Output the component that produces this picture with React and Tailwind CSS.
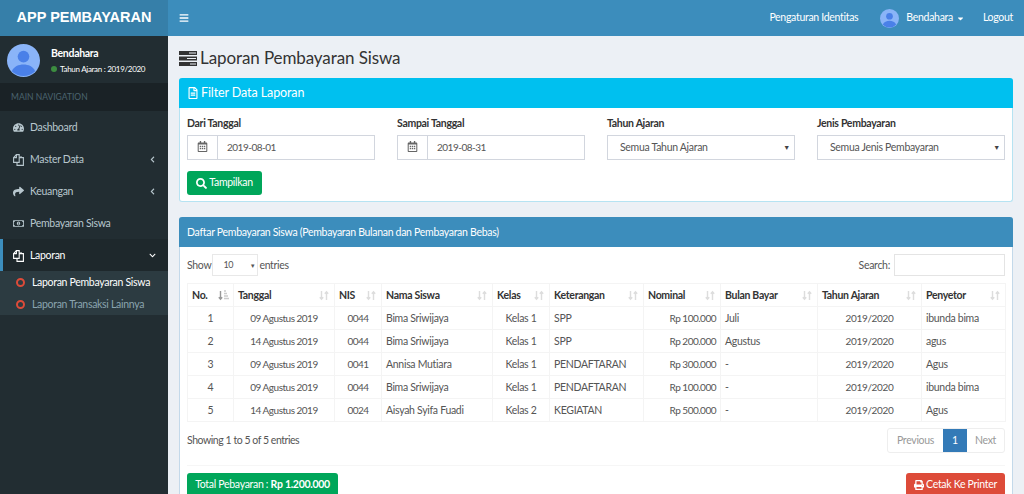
import { FaBars, FaRegCalendarAlt, FaCaretDown, FaChevronDown, FaChevronLeft, FaRegFileAlt, FaRegMoneyBillAlt, FaPrint, FaSearch, FaShare, FaTachometerAlt } from "react-icons/fa";

function FilesIcon() {
  return (
    <svg width="11" height="12" viewBox="0 0 11 12" fill="none" stroke="currentColor" strokeWidth="1.1">
      <path d="M.6 3.6 3.4.6h2.8v7.8H.6z" />
      <path d="M.6 3.6h2.8V.6" />
      <path d="M4 8.4v3h6.4V3.6H6.2" />
      <path d="M8 3.6V2" />
    </svg>
  );
}

const MENU = [
  { label: "Dashboard", icon: <FaTachometerAlt /> },
  { label: "Master Data", icon: <FilesIcon />, arrow: true },
  { label: "Keuangan", icon: <FaShare />, arrow: true },
  { label: "Pembayaran Siswa", icon: <FaRegMoneyBillAlt /> },
];

const COLS = [
  { label: "No.", w: "w-[46px]" },
  { label: "Tanggal", w: "w-[101px]" },
  { label: "NIS", w: "w-[47px]" },
  { label: "Nama Siswa", w: "w-[111px]" },
  { label: "Kelas", w: "w-[57px]" },
  { label: "Keterangan", w: "w-[94px]" },
  { label: "Nominal", w: "w-[77px]" },
  { label: "Bulan Bayar", w: "w-[97px]" },
  { label: "Tahun Ajaran", w: "w-[104px]" },
  { label: "Penyetor", w: "w-[84px]" },
];

const ROWS = [
  ["1", "09 Agustus 2019", "0044", "Bima Sriwijaya", "Kelas 1", "SPP", "Rp 100.000", "Juli", "2019/2020", "ibunda bima"],
  ["2", "14 Agustus 2019", "0044", "Bima Sriwijaya", "Kelas 1", "SPP", "Rp 200.000", "Agustus", "2019/2020", "agus"],
  ["3", "09 Agustus 2019", "0041", "Annisa Mutiara", "Kelas 1", "PENDAFTARAN", "Rp 300.000", "-", "2019/2020", "Agus"],
  ["4", "09 Agustus 2019", "0044", "Bima Sriwijaya", "Kelas 1", "PENDAFTARAN", "Rp 100.000", "-", "2019/2020", "ibunda bima"],
  ["5", "14 Agustus 2019", "0024", "Aisyah Syifa Fuadi", "Kelas 2", "KEGIATAN", "Rp 500.000", "-", "2019/2020", "Agus"],
];

// number columns are squeezed a bit more, Lato digits run wide
const CELL = [
  "text-center",
  "text-center text-[10px] tracking-[-0.5px]",
  "text-center text-[10px] tracking-[-0.5px]",
  "text-left",
  "text-center",
  "text-left",
  "text-right text-[10px] tracking-[-0.5px]",
  "text-left",
  "text-center text-[10px] tracking-[-0.3px]",
  "text-left",
];

function Avatar({ size }) {
  return (
    <svg width={size} height={size} viewBox="0 0 34 34" className="shrink-0">
      <circle cx="17" cy="17" r="17" fill="#8ab4f8" />
      <circle cx="17" cy="13" r="6" fill="#4a80e8" />
      <path d="M5 28c2-5 7-7 12-7s10 2 12 7a17 17 0 0 1-24 0z" fill="#4a80e8" />
    </svg>
  );
}

function SortIcon({ active }) {
  return (
    <svg width="11" height="11" viewBox="0 0 11 11" className="shrink-0">
      <path d="M2.5 1v8M.8 7.2l1.7 2 1.7-2" fill="none" stroke={active ? "#999" : "#ddd"} strokeWidth="1.4" />
      {active ? (
        <path d="M6 1h2M6 3.5h3M6 6h4M6 8.5h5" stroke="#ccc" strokeWidth="1.3" />
      ) : (
        <path d="M7.5 10V2M5.8 3.8l1.7-2 1.7 2" fill="none" stroke="#ddd" strokeWidth="1.4" />
      )}
    </svg>
  );
}

function DateInput({ value }) {
  return (
    <div className="flex h-[25px] w-[188px] border border-[#d2d6de] text-[10px] tracking-[-0.5px] text-[#555]">
      <span className="flex w-[30px] items-center justify-center border-r border-[#d2d6de] pb-[3px] text-[11px] text-[#666]">
        <FaRegCalendarAlt />
      </span>
      <span className="flex items-center pl-[9px]">{value}</span>
    </div>
  );
}

function SelectBox({ value }) {
  return (
    <div className="flex h-[25px] w-[188px] items-center justify-between border border-[#d2d6de] pl-3 pr-1 text-[#555]">
      <span>{value}</span>
      <span className="text-[7px] text-[#444]">▼</span>
    </div>
  );
}

function Field({ label, children }) {
  return (
    <div className="w-[210px] shrink-0">
      <div className="mb-[5px] leading-[14px] font-bold text-[#333]">{label}</div>
      {children}
    </div>
  );
}

export default function App() {
  return (
    <div className="flex h-[494px] w-[1024px] flex-col overflow-hidden bg-[#ecf0f5] font-['Lato',sans-serif] text-[10.5px] tracking-[-0.3px] text-[#333]">
      <header className="flex h-9 shrink-0 bg-[#3c8dbc] text-white">
        <div className="flex w-[168px] items-center justify-center bg-[#367fa9] font-['Liberation_Sans',sans-serif] text-[14.5px] font-bold tracking-normal">
          APP PEMBAYARAN
        </div>
        <div className="flex flex-1 items-center pl-[11px] pr-[11px]">
          <FaBars className="text-[10px]" />
          <span className="ml-auto">Pengaturan Identitas</span>
          <span className="ml-[22px] flex items-center gap-[7px]">
            <Avatar size={19} />
            Bendahara
            <FaCaretDown className="-ml-1 text-[9px]" />
          </span>
          <span className="ml-[18px]">Logout</span>
        </div>
      </header>

      <div className="flex min-h-0 flex-1">
        <aside className="w-[168px] shrink-0 bg-[#222d32] text-[#b8c7ce]">
          <div className="flex h-[47px] items-center gap-[11px] pl-[7px] pt-[2px]">
            <Avatar size={33} />
            <div>
              <div className="leading-[14px] font-bold text-white">Bendahara</div>
              <div className="mt-[3px] flex items-center gap-[3px] text-[8px] leading-[12px] text-white">
                <span className="h-[6px] w-[6px] rounded-full bg-[#3c8d40]" />
                Tahun Ajaran : 2019/2020
              </div>
            </div>
          </div>
          <div className="flex h-7 items-center bg-[#1a2226] pl-[11px] pt-px text-[8.5px] tracking-normal text-[#4b646f]">MAIN NAVIGATION</div>
          {MENU.map((m) => (
            <div key={m.label} className="flex h-8 items-center pl-[13px] pr-[12px] pt-px">
              <span className="w-[17px] text-[11px]">{m.icon}</span>
              {m.label}
              {m.arrow && <FaChevronLeft className="ml-auto text-[7px]" />}
            </div>
          ))}
          <div className="flex h-8 items-center border-l-[3px] border-[#3c8dbc] bg-[#1e282c] pl-[10px] pr-[12px] pt-px text-white">
            <span className="w-[17px] text-[11px]"><FilesIcon /></span>
            Laporan
            <FaChevronDown className="ml-auto text-[7px]" />
          </div>
          <div className="bg-[#2c3b41]">
            <div className="flex h-[22px] items-center pl-[16px] pt-px text-white">
              <span className="mr-[7px] h-[9px] w-[9px] rounded-full border-2 border-[#dd4b39]" />
              Laporan Pembayaran Siswa
            </div>
            <div className="flex h-[22px] items-center pl-[16px] pt-px text-[#8aa4af]">
              <span className="mr-[7px] h-[9px] w-[9px] rounded-full border-2 border-[#dd4b39]" />
              Laporan Transaksi Lainnya
            </div>
          </div>
        </aside>

        <main className="min-w-0 flex-1 pl-[11px] pr-[11px]">
          <h1 className="flex h-[42px] items-center gap-[3px] pt-[2px] text-[17px] tracking-[-0.1px] text-[#333]">
            <svg width="18" height="15" viewBox="0 0 18 15" className="shrink-0">
              <path d="M0 0h18v4H0zM0 5.5h18v4H0zM0 11h18v4H0z" fill="#333" />
              <path d="M10 2h7M8 7.5h9M11 13h6" stroke="#ecf0f5" strokeWidth="1" />
            </svg>
            Laporan Pembayaran Siswa
          </h1>

          <section className="h-[124px] rounded-[3px] border-x border-b border-[#b6e3f2] bg-white">
            <div className="-mx-px flex h-[30px] items-center gap-[2px] rounded-t-[3px] bg-[#00c0ef] pl-2 text-[12.5px] tracking-[-0.1px] text-white">
              <FaRegFileAlt className="text-[12px]" />
              Filter Data Laporan
            </div>
            <div className="pl-[7px] pt-[8px]">
              <div className="flex">
                <Field label="Dari Tanggal"><DateInput value="2019-08-01" /></Field>
                <Field label="Sampai Tanggal"><DateInput value="2019-08-31" /></Field>
                <Field label="Tahun Ajaran"><SelectBox value="Semua Tahun Ajaran" /></Field>
                <Field label="Jenis Pembayaran"><SelectBox value="Semua Jenis Pembayaran" /></Field>
              </div>
              <button className="mt-[11px] flex h-6 w-[75px] items-center justify-center gap-[2px] rounded-[3px] bg-[#00a65a] text-white">
                <FaSearch className="text-[11px]" />
                Tampilkan
              </button>
            </div>
          </section>

          <section className="mt-[15px] h-[300px] rounded-[3px] border-x border-[#c3d9ea] bg-white">
            <div className="-mx-px flex h-[30px] items-center rounded-t-[3px] bg-[#3c8dbc] pl-2 pt-px text-white">
              Daftar Pembayaran Siswa (Pembayaran Bulanan dan Pembayaran Bebas)
            </div>
            <div className="px-[7px]">
              <div className="flex h-9 items-center justify-between text-[#555]">
                <div className="flex items-center gap-[1px]">
                  <span className="pt-px">Show</span>
                  <span className="flex h-[22px] w-[46px] items-center justify-between border border-[#e8e8e8] pl-[10px] pr-[2px] text-[9px]">
                    10 <span className="text-[6px]">▼</span>
                  </span>
                  <span className="pt-px">entries</span>
                </div>
                <div className="flex items-center gap-1">
                  <span className="pt-px">Search:</span>
                  <span className="h-[22px] w-[111px] border border-[#e4e4e4]" />
                </div>
              </div>

              <table className="w-[818px] table-fixed border-collapse">
                <thead>
                  <tr className="h-[23px]">
                    {COLS.map((c, i) => (
                      <th key={c.label} className={`${c.w} border border-[#f4f4f4] px-[4px] pt-px text-left font-bold text-[#333]`}>
                        <span className="flex items-center justify-between">
                          {c.label}
                          <SortIcon active={i === 0} />
                        </span>
                      </th>
                    ))}
                  </tr>
                </thead>
                <tbody>
                  {ROWS.map((r) => (
                    <tr key={r[0]} className="h-[23px]">
                      {r.map((v, i) => (
                        <td key={i} className={`${CELL[i]} border border-[#f4f4f4] px-[4px] pt-[4px] align-baseline leading-[14px] whitespace-nowrap text-[#555]`}>
                          {v}
                        </td>
                      ))}
                    </tr>
                  ))}
                </tbody>
              </table>

              <div className="flex items-start justify-between pt-[6px]">
                <span className="pt-[5px] leading-[14px] tracking-[-0.45px] text-[#555]">Showing 1 to 5 of 5 entries</span>
                <div className="flex h-[25px] overflow-hidden rounded-[3px] border border-[#eee] text-[#999]">
                  <span className="flex w-[55px] items-center justify-center">Previous</span>
                  <span className="flex w-6 items-center justify-center bg-[#337ab7] text-white">1</span>
                  <span className="flex w-[37px] items-center justify-center">Next</span>
                </div>
              </div>

              <div className="mt-3 flex justify-between border-t border-[#f6f6f6] pt-[7px]">
                <span className="flex h-6 w-[151px] items-center justify-center rounded-[3px] bg-[#00a65a] whitespace-nowrap text-white">
                  Total Pebayaran :&nbsp;<b>Rp 1.200.000</b>
                </span>
                <span className="flex h-6 w-[99px] items-center justify-center gap-[2px] rounded-[3px] bg-[#dd4b39] whitespace-nowrap text-white">
                  <FaPrint className="text-[10px]" />
                  Cetak Ke Printer
                </span>
              </div>
            </div>
          </section>
        </main>
      </div>
    </div>
  );
}
